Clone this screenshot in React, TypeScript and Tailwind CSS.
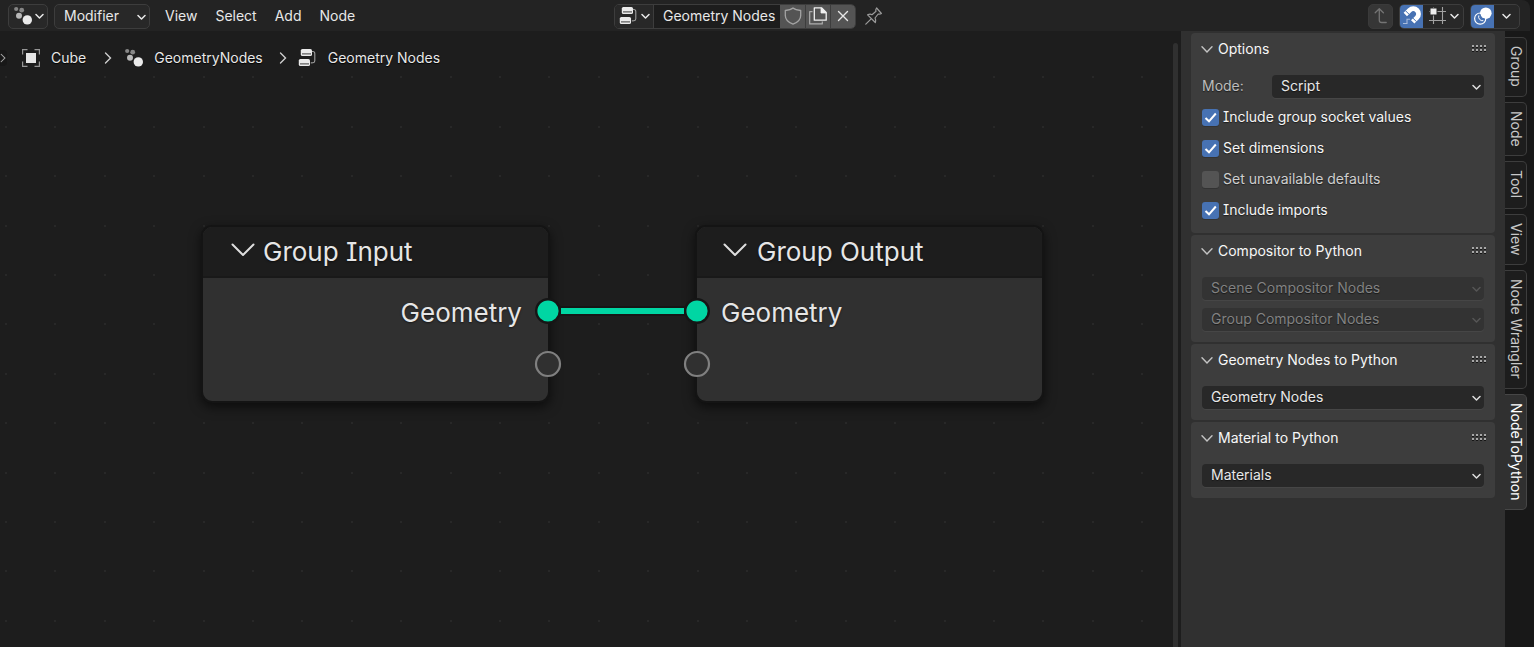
import React, { useState } from "react";

type IconProps = { className?: string };

function ChevronDown({ className = "" }: IconProps) {
  return (
    <svg className={className} width="9" height="7" viewBox="0 0 9 7" fill="none" stroke="currentColor" strokeWidth="1.5" strokeLinecap="round" strokeLinejoin="round" aria-hidden="true">
      <path d="M1 1.5 4.5 5 8 1.5" />
    </svg>
  );
}

function PanelChevron() {
  return (
    <svg className="text-[#c4c4c4]" width="12" height="8" viewBox="0 0 12 8" fill="none" stroke="currentColor" strokeWidth="1.4" strokeLinecap="round" aria-hidden="true">
      <path d="M1 1.7 6 7 11 1.7" />
    </svg>
  );
}

function ChevronRight() {
  return (
    <svg width="8" height="12" viewBox="0 0 8 12" fill="none" stroke="#cfcfcf" strokeWidth="1.4" strokeLinecap="round" aria-hidden="true">
      <path d="M1.5 1 6.5 6 1.5 11" />
    </svg>
  );
}

function ModifierIcon() {
  return (
    <svg width="20" height="20" viewBox="0 0 20 20" aria-hidden="true">
      <circle cx="3.2" cy="3" r="2.1" fill="#868686" />
      <circle cx="8.7" cy="4.2" r="2.4" fill="#868686" />
      <circle cx="6" cy="9.8" r="3" fill="#b8b8b8" />
      <circle cx="14.3" cy="13.9" r="4.7" fill="#eaeaea" />
    </svg>
  );
}

function NodeTreeIcon() {
  return (
    <svg width="20" height="20" viewBox="0 0 20 20" aria-hidden="true">
      <path d="M14 3.500h.8c1.200 0 2 .9 2 2v7.200c0 1.200-.8 2-1.800 2.100l-2.200.1" fill="none" stroke="#a0a0a0" strokeWidth="1.1" />
      <rect x="2.800" y="1" width="11.200" height="7" rx="1.600" fill="#eaeaea" />
      <rect x=".8" y="11" width="11.200" height="7" rx="1.600" fill="#eaeaea" />
      <path d="M4 5.900h9M2 15.900h9" stroke="#2a2a2a" strokeWidth=".9" />
    </svg>
  );
}

function ObjectIcon() {
  return (
    <svg width="20" height="20" viewBox="0 0 20 20" aria-hidden="true">
      <rect x="5" y="5" width="10" height="10" fill="#e6e6e6" />
      <path d="M1.6 6.5V1.6h4.9M13.5 1.6h4.9v4.9M18.4 13.5v4.9h-4.9M6.5 18.4H1.6v-4.9" fill="none" stroke="#969696" strokeWidth="1.2" />
    </svg>
  );
}

function ShieldIcon() {
  return (
    <svg width="18" height="18" viewBox="0 0 18 18" fill="none" stroke="#a3a3a3" strokeWidth="1.3" strokeLinejoin="round" aria-hidden="true">
      <path d="M9 1C7 2.8 4.500 3.300 1.300 3.500V8.500C1.300 12.600 4 15.300 9 17.200 14 15.300 16.700 12.600 16.700 8.500V3.500C13.500 3.300 11 2.800 9 1Z" />
    </svg>
  );
}

function DuplicateIcon() {
  return (
    <svg width="18" height="18" viewBox="0 0 18 18" fill="none" strokeLinejoin="round" aria-hidden="true">
      <path d="M3.500 4.700H.7v12.200h12.600v-2.500" stroke="#adadad" strokeWidth="1.200" />
      <path d="M5.300.8h7.200l4.700 4.700v7.700H5.300Z" stroke="#f0f0f0" strokeWidth="1.300" />
      <path d="M12 .8v5.200h5.200Z" fill="#f0f0f0" stroke="#f0f0f0" strokeWidth=".8" />
    </svg>
  );
}

function CloseIcon() {
  return (
    <svg width="12" height="12" viewBox="0 0 12 12" stroke="#e6e6e6" strokeWidth="1.400" strokeLinecap="round" aria-hidden="true">
      <path d="M1.500 1.500l9 9M10.500 1.500l-9 9" />
    </svg>
  );
}

function PinIcon() {
  return (
    <svg width="18" height="18" viewBox="0 0 18 18" fill="none" stroke="#9c9c9c" strokeWidth="1.200" strokeLinejoin="round" strokeLinecap="round" aria-hidden="true">
      <path d="M.8 17.200 6.200 11.800M2.600 7.800l7.700 7.700c.5-1.700.5-3.200-.3-4.500l3.200-4c1 .3 2.200.2 3.200-.5L11.600 1c-.8 1-1 2.200-.6 3.300L7 7.700c-1.300-.7-2.800-.6-4.400.1Z" />
    </svg>
  );
}

function ParentIcon() {
  return (
    <svg width="18" height="18" viewBox="0 0 18 18" fill="none" stroke="#747474" strokeWidth="1.300" strokeLinecap="round" strokeLinejoin="round" aria-hidden="true">
      <path d="M3.200 5.800 7.300 1.700l4.100 4.100M7.300 2v11.200c0 1.500.8 2.300 2.300 2.300h4.600" />
    </svg>
  );
}

function MagnetIcon() {
  return (
    <svg width="20" height="20" viewBox="0 0 20 20" fill="none" aria-hidden="true">
      <path d="M3.300 8.500 7.600 4.200A5.200 5.200 0 0 1 15 11.600L10.700 15.900" stroke="#fff" strokeWidth="4.800" />
      <path d="M3.600 4.800 8.400 9.600M9.600 10.800l4.800 4.800" stroke="#4772b3" strokeWidth="1" />
      <path d="M1 17.500h4v-4.200h3" stroke="#a9bcdc" strokeWidth="1.100" />
    </svg>
  );
}

function GridIcon() {
  return (
    <svg width="20" height="20" viewBox="0 0 20 20" fill="none" aria-hidden="true">
      <path d="M1 5.500h17M1 14.500h17M5.500 1v17M14.500 1v17" stroke="#a2a2a2" strokeWidth="1.100" />
      <rect x="2" y="2" width="7" height="7" fill="#eee" stroke="#282828" strokeWidth="1" />
    </svg>
  );
}

function OverlayIcon() {
  return (
    <svg width="20" height="20" viewBox="0 0 20 20" fill="none" aria-hidden="true">
      <circle cx="12.800" cy="7.200" r="5.800" fill="#fff" />
      <circle cx="7.200" cy="12.600" r="5.600" stroke="#fff" strokeWidth="1.200" />
      <path d="M7.100 8.200a4.400 4.400 0 0 0 4.600 4.700" stroke="#4772b3" strokeWidth="1.200" />
      <path d="M5.800 9.500a4 4 0 0 0 4.500 5.200" stroke="#fff" strokeWidth="1" />
    </svg>
  );
}

function GripDots() {
  return (
    <svg width="15" height="8" viewBox="0 0 15 8" aria-hidden="true">
      {[0, 4, 8, 12].map((x) =>
        [0, 4].map((y) => (
          <g key={`${x}-${y}`}>
            <rect x={x} y={y} width="2" height="2" fill="#a8a8a8" />
            <rect x={x} y={y + 2} width="2" height="1" fill="#161616" />
          </g>
        )),
      )}
    </svg>
  );
}

function Dropdown({ label, value, disabled = false }: { label: string; value: string; disabled?: boolean }) {
  return (
    <div className="relative min-w-0 flex-1">
      <select
        aria-label={label}
        disabled={disabled}
        defaultValue={value}
        className="block h-[23px] w-full appearance-none rounded-sm bg-[#282828] pr-6 pb-px pl-[9px] text-[#e8e8e8] shadow-[0_1px_0_#464646] outline-none text-shadow-[0_1px_1px_#0008] disabled:bg-[#333333] disabled:text-[#828282] disabled:opacity-100"
      >
        <option>{value}</option>
      </select>
      <ChevronDown className={disabled ? "pointer-events-none absolute top-[9px] right-[3px] text-[#565656]" : "pointer-events-none absolute top-[9px] right-[3px] text-[#dedede]"} />
    </div>
  );
}

function CheckRow({ label, initial }: { label: string; initial: boolean }) {
  const [checked, setChecked] = useState(initial);
  return (
    <label className={checked ? "flex h-6 items-center gap-1 pb-[2px] text-[#f5f5f5]" : "flex h-6 items-center gap-1 pb-[2px] text-[#cfcfcf]"}>
      <span className="relative flex">
        <input
          type="checkbox"
          checked={checked}
          onChange={(e) => setChecked(e.target.checked)}
          className="size-[17px] appearance-none rounded-[3px] bg-[#545454] shadow-[0_1px_0_#333] checked:bg-[#4772b3]"
        />
        {checked && (
          <svg className="pointer-events-none absolute inset-0" width="17" height="17" viewBox="0 0 17 17" fill="none" stroke="#fff" strokeWidth="2" aria-hidden="true">
            <path d="M3.500 9 7 12.300 13.800 4.500" />
          </svg>
        )}
      </span>
      <span className="pb-px">{label}</span>
    </label>
  );
}

function Panel({ title, children }: { title: string; children: React.ReactNode }) {
  return (
    <section className="rounded-[4px] bg-[#3d3d3d] pb-[10px]">
      <h2>
        <button className="flex h-8 w-full items-center gap-[5px] pr-2 pl-[10px] text-left text-[#f7f7f7]">
          <PanelChevron />
          <span className="flex-1 pb-px">{title}</span>
          <GripDots />
        </button>
      </h2>
      <div className="flex flex-col gap-[7px] px-[11px] pt-[10px]">{children}</div>
    </section>
  );
}

function Socket({ linked }: { linked: boolean }) {
  return linked ? (
    <svg width="28" height="28" viewBox="0 0 28 28" aria-hidden="true">
      <circle cx="14" cy="14" r="11.800" fill="#00d6a3" stroke="#161616" strokeWidth="2.400" />
    </svg>
  ) : (
    <svg width="28" height="28" viewBox="0 0 28 28" aria-hidden="true">
      <circle cx="14" cy="14" r="12" fill="#303030" stroke="#808080" strokeWidth="2.200" />
    </svg>
  );
}

function GraphNode({ title, side }: { title: string; side: "in" | "out" }) {
  const out = side === "out";
  return (
    <article
      className={
        out
          ? "absolute top-[194px] left-[201px] h-[178px] w-[349px] rounded-[11px] border-2 border-[#141414] bg-[#303030] text-[26px] text-[#e6e6e6] shadow-[0_4px_12px_#0009] text-shadow-[0_1px_2px_#0008]"
          : "absolute top-[194px] left-[695px] h-[178px] w-[349px] rounded-[11px] border-2 border-[#141414] bg-[#303030] text-[26px] text-[#e6e6e6] shadow-[0_4px_12px_#0009] text-shadow-[0_1px_2px_#0008]"
      }
    >
      <header className={out ? "flex h-[51px] items-center gap-2 rounded-t-[9px] border-b-2 border-[#191919] bg-[#1d1d1d] pl-7" : "flex h-[51px] items-center gap-[10px] rounded-t-[9px] border-b-2 border-[#191919] bg-[#1d1d1d] pl-[26px]"}>
        <svg className="mb-1" width="24" height="14" viewBox="0 0 24 14" fill="none" stroke="#dedede" strokeWidth="2" strokeLinecap="round" strokeLinejoin="round" aria-hidden="true">
          <path d="M1.500 1.500 12 12 22.500 1.500" />
        </svg>
        <h3>{title}</h3>
      </header>
      <p className={out ? "flex h-[70px] items-center justify-end pr-[26px]" : "flex h-[70px] items-center pl-6"}>Geometry</p>
      <div className={out ? "absolute top-[70px] -right-[14px] flex flex-col gap-[25px]" : "absolute top-[70px] -left-[14px] flex flex-col gap-[25px]"}>
        <Socket linked />
        <Socket linked={false} />
      </div>
    </article>
  );
}

const gridColumns = [5, 54, 104, 153, 203];
const gridRows = [45, 95, 144, 194, 243];

function NodeCanvas() {
  return (
    <div className="relative min-w-0 flex-1 overflow-hidden bg-[#1d1d1d]">
      <svg className="absolute inset-0 size-full" aria-hidden="true">
        <defs>
          <pattern id="grid" width="247" height="247" patternUnits="userSpaceOnUse">
            {gridColumns.map((x) => gridRows.map((y) => <rect key={`${x}-${y}`} x={x} y={y} width="2" height="2" fill="#282828" />))}
          </pattern>
        </defs>
        <rect width="100%" height="100%" fill="url(#grid)" />
      </svg>
      <nav aria-label="Context path" className="relative flex h-[54px] items-center text-[#e8e8e8] text-shadow-[0_1px_1px_#000]">
        <button aria-label="Show toolbar" className="flex h-4 w-[7px] items-center justify-end overflow-hidden rounded-r-sm bg-[#181818] pr-px opacity-80">
          <ChevronRight />
        </button>
        <a href="#cube" className="ml-[14px] flex items-center gap-[10px]">
          <ObjectIcon />
          Cube
        </a>
        <span className="ml-[18px]">
          <ChevronRight />
        </span>
        <a href="#modifier" className="ml-3 flex items-center gap-[10px]">
          <ModifierIcon />
          GeometryNodes
        </a>
        <span className="ml-4">
          <ChevronRight />
        </span>
        <a href="#tree" className="ml-[11px] flex items-center gap-[10px]">
          <NodeTreeIcon />
          Geometry Nodes
        </a>
      </nav>
      <GraphNode title="Group Input" side="out" />
      <GraphNode title="Group Output" side="in" />
      <svg className="absolute top-[274px] left-[560px]" width="125" height="12" viewBox="0 0 125 12" aria-hidden="true">
        <rect y="1" width="125" height="10" fill="#161616" />
        <rect y="3" x="1" width="123" height="6" fill="#00d6a3" />
      </svg>
    </div>
  );
}

function Header() {
  return (
    <header className="flex h-[31px] items-center rounded-tr-lg bg-[#232323] pt-px pl-2 pr-[10px] text-[#e8e8e8] text-shadow-[0_1px_1px_#0008]">
      <div className="flex flex-1 items-center">
        <button aria-label="Editor type" className="flex h-[25px] w-10 items-center gap-[2px] rounded-[5px] border border-[#3d3d3d] bg-[#282828] pl-1">
          <ModifierIcon />
          <ChevronDown />
        </button>
        <div className="relative ml-[6px]">
          <select aria-label="Geometry nodes type" className="block h-[25px] w-24 appearance-none rounded-[5px] border border-[#3d3d3d] bg-[#282828] pb-px pl-[9px] outline-none">
            <option>Modifier</option>
          </select>
          <ChevronDown className="pointer-events-none absolute top-[10px] right-1" />
        </div>
        <nav aria-label="Menus" className="ml-[15px] flex gap-[18px] pb-px">
          <button>View</button>
          <button>Select</button>
          <button>Add</button>
          <button>Node</button>
        </nav>
      </div>
      <div className="mr-7 flex items-center">
        <div className="flex h-[25px] w-[242px] items-stretch overflow-hidden rounded-[5px] border border-[#3d3d3d] bg-[#1d1d1d]">
          <button aria-label="Browse node tree" className="flex w-[39px] items-center gap-[2px] border-r border-[#3d3d3d] bg-[#282828] pl-1">
            <NodeTreeIcon />
            <ChevronDown />
          </button>
          <input aria-label="Node tree name" defaultValue="Geometry Nodes" className="min-w-0 flex-1 bg-transparent pb-px pl-[9px] outline-none" />
          <button aria-label="Fake user" className="flex w-[25px] items-center justify-center bg-[#545454]">
            <ShieldIcon />
          </button>
          <button aria-label="Duplicate" className="flex w-[25px] items-center justify-center border-l border-[#3d3d3d] bg-[#545454]">
            <DuplicateIcon />
          </button>
          <button aria-label="Unlink" className="flex w-[25px] items-center justify-center border-l border-[#3d3d3d] bg-[#545454]">
            <CloseIcon />
          </button>
        </div>
        <button aria-label="Pin" className="ml-[9px] flex w-[21px]">
          <PinIcon />
        </button>
      </div>
      <div className="flex flex-1 items-center justify-end gap-[6px]">
        <button aria-label="Parent node tree" className="flex h-[25px] w-[25px] items-center justify-center rounded-[5px] border border-[#3a3a3a] bg-[#363636]">
          <ParentIcon />
        </button>
        <div className="flex h-[25px] overflow-hidden rounded-[5px] border border-[#3d3d3d] bg-[#282828]">
          <button aria-label="Snap" className="flex w-[23px] items-center justify-center bg-[#4772b3]">
            <MagnetIcon />
          </button>
          <button aria-label="Snap to" className="flex w-10 items-center gap-[2px] pl-[5px]">
            <GridIcon />
            <ChevronDown />
          </button>
        </div>
        <div className="flex h-[25px] overflow-hidden rounded-[5px] border border-[#3d3d3d] bg-[#282828]">
          <button aria-label="Show overlays" className="flex w-[23px] items-center justify-center bg-[#4772b3]">
            <OverlayIcon />
          </button>
          <button aria-label="Overlay options" className="flex w-[25px] items-center justify-center">
            <ChevronDown />
          </button>
        </div>
      </div>
    </header>
  );
}

const tabs = ["Group", "Node", "Tool", "View", "Node Wrangler", "NodeToPython"];

function SideTabs() {
  const [active, setActive] = useState("NodeToPython");
  return (
    <div role="tablist" aria-label="Sidebar categories" aria-orientation="vertical" className="flex w-[29px] flex-col items-start gap-[5px] bg-[#181818] pt-[6px]">
      {tabs.map((tab) => (
        <button
          key={tab}
          role="tab"
          aria-selected={tab === active}
          onClick={() => setActive(tab)}
          className={
            tab === active
              ? "flex w-[22px] items-center justify-center rounded-r-[5px] border border-l-0 border-[#464646] bg-[#303030] pt-[8px] pb-[9px] text-white [writing-mode:vertical-rl]"
              : "flex w-[22px] items-center justify-center rounded-r-[5px] border border-l-0 border-[#3d3d3d] bg-[#1d1d1d] pt-[8px] pb-[9px] text-[#c8c8c8] [writing-mode:vertical-rl]"
          }
        >
          {tab}
        </button>
      ))}
    </div>
  );
}

export default function App() {
  return (
    <div className="flex h-screen flex-col overflow-hidden bg-[#181818] font-['Inter','Liberation_Sans',sans-serif] text-[14px] leading-5 whitespace-nowrap [font-feature-settings:'cv08']">
      <div className="pr-1">
        <Header />
      </div>
      <main className="flex min-h-0 flex-1">
        <NodeCanvas />
        <div className="flex w-2 bg-[#1d1d1d] pt-3" aria-hidden="true">
          <div className="w-[5px] rounded-t-sm bg-[#303030]" />
        </div>
        <aside className="flex w-[324px] flex-col gap-[2px] bg-[#303030] px-[10px] pt-[2px] text-shadow-[0_1px_1px_#0008]">
          <Panel title="Options">
            <div className="flex h-6">
              <span className="w-[70px] pt-px text-[#bdbdbd]">Mode:</span>
              <Dropdown label="Mode" value="Script" />
            </div>
            <CheckRow label="Include group socket values" initial />
            <CheckRow label="Set dimensions" initial />
            <CheckRow label="Set unavailable defaults" initial={false} />
            <CheckRow label="Include imports" initial />
          </Panel>
          <Panel title="Compositor to Python">
            <div className="flex h-6">
              <Dropdown label="Scene compositor" value="Scene Compositor Nodes" disabled />
            </div>
            <div className="flex h-6">
              <Dropdown label="Group compositor" value="Group Compositor Nodes" disabled />
            </div>
          </Panel>
          <Panel title="Geometry Nodes to Python">
            <div className="flex h-6">
              <Dropdown label="Geometry nodes" value="Geometry Nodes" />
            </div>
          </Panel>
          <Panel title="Material to Python">
            <div className="flex h-6">
              <Dropdown label="Materials" value="Materials" />
            </div>
          </Panel>
        </aside>
        <SideTabs />
      </main>
    </div>
  );
}
